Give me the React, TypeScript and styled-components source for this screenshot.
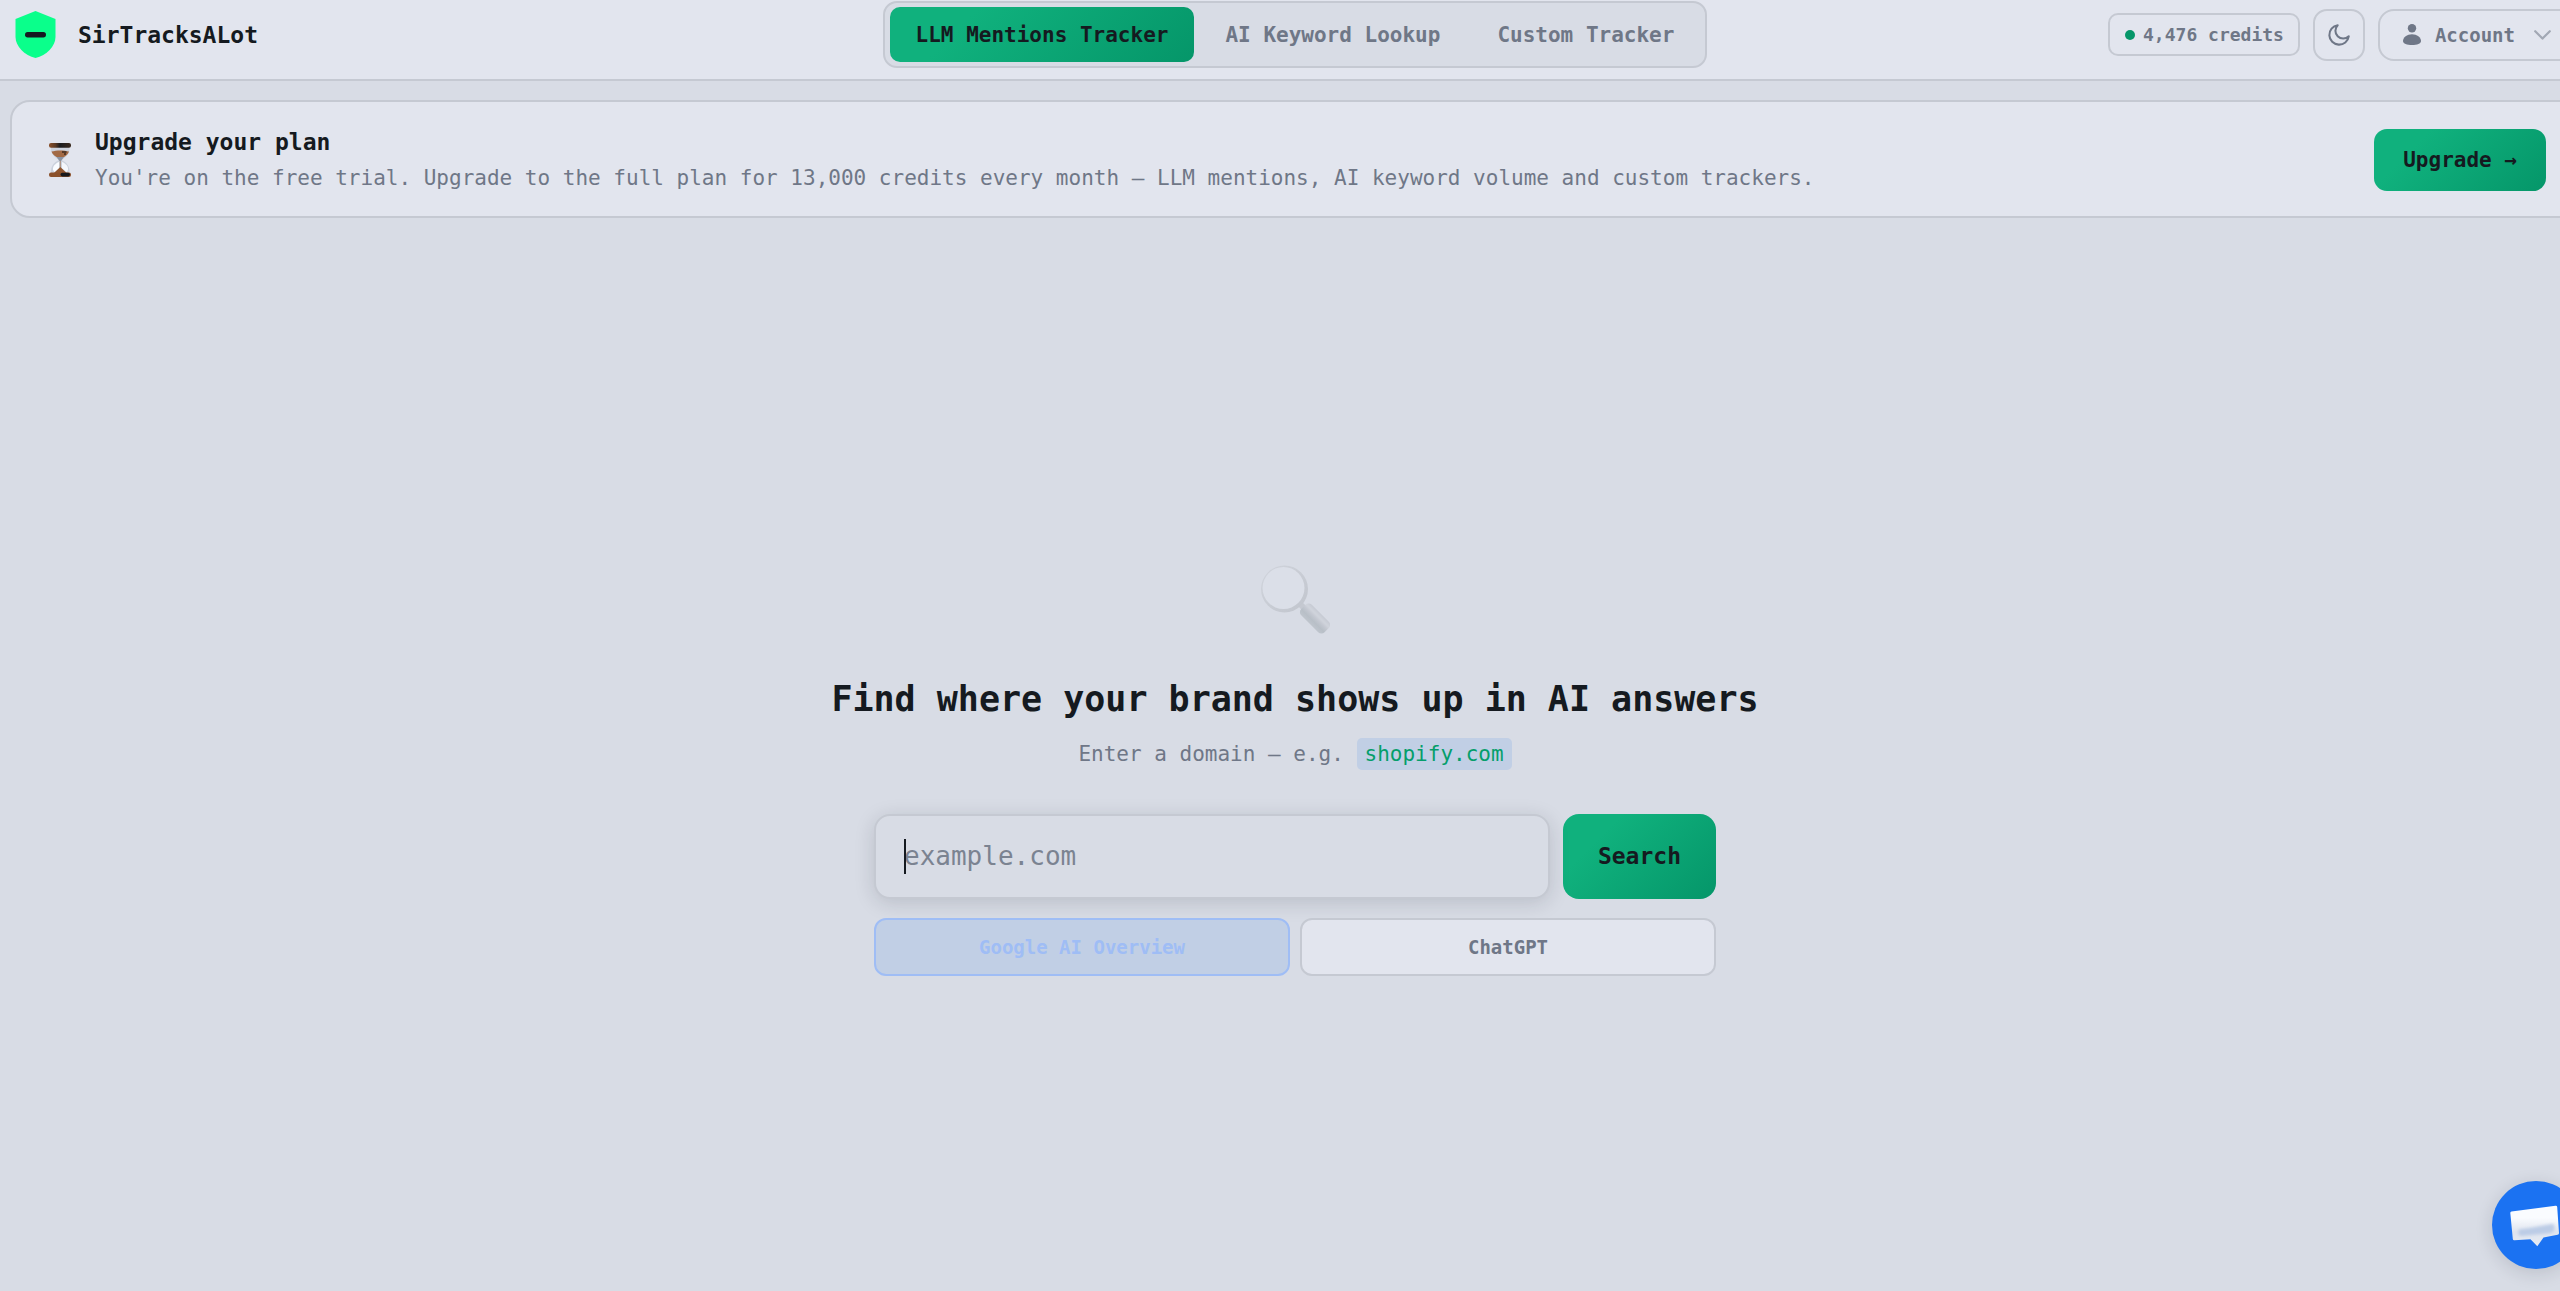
import React, { useState } from "react";
import styled, { createGlobalStyle, css } from "styled-components";

const color = {
  page: "#d8dce5",
  panel: "#e2e5ee",
  line: "#c5c9d2",
  ink: "#151a20",
  muted: "#6f7787",
  green: "#059669",
  gradient: "linear-gradient(135deg, #10b17d 25%, #059669 100%)",
  blue: "#9fbdf5",
  blueFill: "#c1cfe5",
};

const mono = `"DejaVu Sans Mono", "Liberation Mono", monospace`;

const GlobalStyle = createGlobalStyle`
  *, *::before, *::after { box-sizing: border-box; }
  body {
    margin: 0;
    background: ${color.page};
    color: ${color.ink};
    font-family: ${mono};
    overflow: hidden;
  }
  button, input { font-family: inherit; margin: 0; }
  button { cursor: pointer; }
  h1, h2, p { margin: 0; }
  svg { display: block; flex: none; }
`;

const Shell = styled.div`
  display: flex;
  flex-direction: column;
  width: calc(100% + 30px);
  min-height: 100vh;
`;

const Header = styled.header`
  display: grid;
  grid-template-columns: 1fr auto 1fr;
  align-items: center;
  padding: 1px 10px 11px;
  background: ${color.panel};
  border-bottom: 2px solid ${color.line};
`;

const Brand = styled.a`
  display: flex;
  align-items: center;
  gap: 22px;
  padding-left: 5px;
  color: ${color.ink};
  font-size: 23px;
  line-height: 32px;
  font-weight: 700;
  text-decoration: none;
`;

const Tabs = styled.nav`
  display: flex;
  gap: 5px;
  padding: 4px 5px;
  background: ${color.page};
  border: 2px solid ${color.line};
  border-radius: 14px;
`;

const Tab = styled.button<{ $active: boolean }>`
  height: 55px;
  padding: 0 26px;
  border: 0;
  border-radius: 10px;
  background: ${(p) => (p.$active ? color.gradient : "transparent")};
  color: ${(p) => (p.$active ? color.ink : color.muted)};
  font-size: 21px;
  font-weight: 700;
`;

const Tools = styled.div`
  display: flex;
  align-items: center;
  justify-content: flex-end;
  gap: 13px;
  color: ${color.muted};
`;

const Credits = styled.div`
  display: flex;
  align-items: center;
  gap: 8px;
  height: 43px;
  padding: 0 14px 0 15px;
  border: 2px solid ${color.line};
  border-radius: 10px;
  font-size: 18px;
  font-weight: 700;
`;

const Dot = styled.span`
  width: 10px;
  height: 10px;
  border-radius: 50%;
  background: ${color.green};
`;

const outlined = css`
  display: flex;
  align-items: center;
  height: 52px;
  border: 2px solid ${color.line};
  background: transparent;
  color: ${color.muted};
`;

const IconButton = styled.button`
  ${outlined}
  justify-content: center;
  width: 52px;
  padding: 0;
  border-radius: 14px;
`;

const AccountButton = styled.button`
  ${outlined}
  gap: 14px;
  padding: 0 27px 0 23px;
  border-radius: 16px;
  font-size: 19px;
  font-weight: 700;

  svg:last-child {
    margin-left: 5px;
  }
`;

const Banner = styled.section`
  display: flex;
  align-items: center;
  gap: 19px;
  margin: 19px 10px 0;
  padding: 22px 32px 20px;
  background: ${color.panel};
  border: 2px solid ${color.line};
  border-radius: 20px;
`;

const BannerText = styled.div`
  flex: 1;
  line-height: 36px;
`;

const BannerTitle = styled.h2`
  font-size: 23px;
  font-weight: 700;
`;

const BannerCopy = styled.p`
  color: ${color.muted};
  font-size: 21px;
`;

const PrimaryButton = styled.button<{ $large?: boolean }>`
  height: ${(p) => (p.$large ? 85 : 62)}px;
  padding: 0 ${(p) => (p.$large ? 35 : 29)}px;
  border: 0;
  border-radius: ${(p) => (p.$large ? 16 : 13)}px;
  background: ${color.gradient};
  color: ${color.ink};
  font-size: ${(p) => (p.$large ? 23 : 21)}px;
  font-weight: 700;
`;

const Hero = styled.main`
  flex: 1;
  display: flex;
  flex-direction: column;
  align-items: center;
  justify-content: center;
  padding-top: 30px;
`;

const HeroTitle = styled.h1`
  margin-top: 43px;
  font-size: 35px;
  line-height: 44px;
  font-weight: 700;
`;

const HeroHint = styled.p`
  margin-top: 17px;
  color: ${color.muted};
  font-size: 21px;
  line-height: 32px;
`;

const Example = styled.code`
  display: inline-block;
  padding: 0 8px;
  border-radius: 5px;
  background: ${color.blueFill};
  color: #059e6b;
  font-family: inherit;
`;

const SearchForm = styled.form`
  display: grid;
  gap: 19px;
  width: 100%;
  max-width: 842px;
  margin-top: 44px;
`;

const SearchRow = styled.div`
  display: flex;
  gap: 13px;
`;

const Field = styled.div`
  position: relative;
  flex: 1;
`;

const Caret = styled.span`
  position: absolute;
  top: 25px;
  left: 30px;
  width: 2px;
  height: 35px;
  background: ${color.ink};
`;

const DomainInput = styled.input`
  width: 100%;
  height: 85px;
  padding: 0 28px;
  border: 2px solid ${color.line};
  border-radius: 16px;
  outline: 0;
  background: ${color.page};
  box-shadow: 0 4px 20px rgba(20, 28, 40, 0.15);
  color: ${color.ink};
  font-size: 26px;

  &::placeholder {
    color: #7b8391;
    opacity: 1;
  }
`;

const Sources = styled.div`
  display: grid;
  grid-template-columns: 1fr 1fr;
  gap: 10px;
`;

const Source = styled.button<{ $active: boolean }>`
  position: relative;
  height: 58px;
  border: 2px solid ${(p) => (p.$active ? color.blue : color.line)};
  border-radius: 12px;
  background: ${(p) => (p.$active ? color.blueFill : color.panel)};
  color: ${(p) => (p.$active ? color.blue : color.muted)};
  font-size: 19px;
  font-weight: 700;
`;

const ChatButton = styled.button`
  position: fixed;
  right: -20px;
  bottom: 22px;
  width: 88px;
  height: 88px;
  padding: 0;
  border: 0;
  border-radius: 50%;
  background: #1b72f2;
  box-shadow: 0 4px 18px rgba(20, 28, 40, 0.14);
`;

const ShieldIcon = () => (
  <svg width="41" height="47" viewBox="0 0 41 47" aria-hidden="true">
    <path d="M20.500 0 40.500 8V26C40.500 35 31.500 44.500 20.500 47 9.500 44.500.5 35 .5 26V8Z" fill="#0aff8b" />
    <rect x="10" y="21" width="21" height="5.500" rx="2.700" fill="#151a20" />
  </svg>
);

const MoonIcon = () => (
  <svg width="26" height="26" viewBox="0 0 24 24" fill="none" stroke="currentColor" strokeWidth="1.900" strokeLinejoin="round" aria-hidden="true">
    <path d="M21 13.200A9 9 0 1 1 10.800 3a7.200 7.200 0 0 0 10.200 10.200Z" />
  </svg>
);

const PersonIcon = () => (
  <svg width="18" height="21" viewBox="0 0 18 21" fill="currentColor" aria-hidden="true">
    <circle cx="9" cy="4.200" r="4.200" />
    <path d="M9 10.300c5 0 9 3.200 9 6.700 0 2.700-4 4-9 4s-9-1.300-9-4c0-3.500 4-6.700 9-6.700Z" />
  </svg>
);

const ChevronIcon = () => (
  <svg width="17" height="10" viewBox="0 0 17 10" fill="none" stroke="#a2a8b4" strokeWidth="2.200" strokeLinecap="round" strokeLinejoin="round" aria-hidden="true">
    <path d="m1.200 1.200 7.300 7.400 7.300-7.400" />
  </svg>
);

const HourglassIcon = () => (
  <svg width="32" height="34" viewBox="0 0 32 34" aria-hidden="true">
    <defs>
      <linearGradient id="wood" x1="0" x2="1">
        <stop offset="0" stopColor="#8b512b" />
        <stop offset=".3" stopColor="#5a3a25" />
        <stop offset=".5" stopColor="#1b1c1e" />
        <stop offset="1" stopColor="#3a2a1f" />
      </linearGradient>
    </defs>
    <path d="M7 4h18.500c.5 6-3 10-8 13 5 2.500 8.500 6 8 13H7c-.5-7 3-10.500 8-13-5-3-8.500-7-8-13Z" fill="#ccd2dd" />
    <path d="M9 27c-.5-4 2.500-6.500 6-8v6.500L10.500 29Z" fill="#fafcff" />
    <path d="M24 27c.5-4-2.500-6.500-6-8v6.500L22.500 29Z" fill="#f4f7fc" />
    <path d="M7.500 8.500c5-1.500 12.500-1.500 17.500 0-.7 2.500-3 4.500-5 5.500h-7.500c-2-1-4.300-3-5-5.500Z" fill="#a26a45" />
    <path d="M18 9h4.500M20 11h2" stroke="#3f2d20" strokeWidth="1.400" />
    <path d="M12.500 14H20l-3 4h-1.500Z" fill="#8b92a0" />
    <path d="M16.300 18v7" stroke="#a98a76" strokeWidth="1" />
    <path d="M16.300 24c2 2 4.500 4 6.200 6H10c2-2 4.300-4 6.300-6Z" fill="#90562f" />
    <rect x="5" y="0" width="22" height="4.800" rx="2" fill="url(#wood)" />
    <rect x="5" y="29.500" width="22" height="4.500" rx="2" fill="#8b512b" />
    <rect x="16.500" y="29.800" width="9.500" height="3.600" rx="1.800" fill="#17191c" />
  </svg>
);

const MagnifierIcon = () => (
  <svg width="70" height="70" viewBox="0 0 70 70" fill="none" aria-hidden="true">
    <defs>
      <linearGradient id="rim" x1="0" y1="0" x2="1" y2="1">
        <stop offset="0" stopColor="#d0d4dc" />
        <stop offset="1" stopColor="#c1c5cd" />
      </linearGradient>
      <linearGradient id="handle" x1="0" y1="0" x2="0" y2="1">
        <stop offset="0" stopColor="#c6cad3" />
        <stop offset=".25" stopColor="#d0d4dc" />
        <stop offset=".45" stopColor="#c4c8d1" />
        <stop offset=".7" stopColor="#b8bfc7" />
        <stop offset="1" stopColor="#bfc5cd" />
      </linearGradient>
    </defs>
    <path d="m39 39 7 7" stroke="#c5c9d1" strokeWidth="6" />
    <circle cx="24.500" cy="25" r="23.500" fill="url(#rim)" />
    <circle cx="23.500" cy="24" r="21" fill="#dbdfe8" />
    <rect x="38.500" y="47" width="33" height="15" rx="4.500" fill="url(#handle)" transform="rotate(45 55 54.500)" />
  </svg>
);

const ChatIcon = () => (
  <svg width="88" height="88" viewBox="0 0 88 88" aria-hidden="true">
    <defs>
      <linearGradient id="bubble" x1="0" y1="0" x2="0" y2="1">
        <stop offset=".3" stopColor="#fafcff" />
        <stop offset=".65" stopColor="#dfe4ee" />
        <stop offset="1" stopColor="#e6ebf4" />
      </linearGradient>
      <filter id="soft">
        <feGaussianBlur stdDeviation="1.800" />
      </filter>
    </defs>
    <path d="M19.500 30.500 63.500 24.700q1.500-.2 1.700 1.300L67 52q.1 1.500-1.400 1.700L51.500 56.500 45.300 65.300 38.500 58.300 22.500 59.200q-1.500.2-1.700-1.300L18.300 32q-.1-1.300 1.200-1.500Z" fill="url(#bubble)" />
    <path d="m27 48.500 11-1.500 22-4q3 0 2.500 5-.5 3-4 4L29 55q-4-1-2-6.500Z" fill="#bccce6" filter="url(#soft)" />
  </svg>
);

const TABS = ["LLM Mentions Tracker", "AI Keyword Lookup", "Custom Tracker"];
const SOURCES = ["Google AI Overview", "ChatGPT"];

export default function App() {
  const [tab, setTab] = useState(TABS[0]);
  const [source, setSource] = useState(SOURCES[0]);
  const [domain, setDomain] = useState("");

  return (
    <>
      <GlobalStyle />
      <Shell>
        <Header>
          <Brand href="#">
            <ShieldIcon />
            SirTracksALot
          </Brand>
          <Tabs>
            {TABS.map((name) => (
              <Tab key={name} type="button" $active={name === tab} onClick={() => setTab(name)}>
                {name}
              </Tab>
            ))}
          </Tabs>
          <Tools>
            <Credits>
              <Dot />
              <span>4,476 credits</span>
            </Credits>
            <IconButton type="button" aria-label="Dark mode">
              <MoonIcon />
            </IconButton>
            <AccountButton type="button">
              <PersonIcon />
              Account
              <ChevronIcon />
            </AccountButton>
          </Tools>
        </Header>

        <Banner>
          <HourglassIcon />
          <BannerText>
            <BannerTitle>Upgrade your plan</BannerTitle>
            <BannerCopy>
              You're on the free trial. Upgrade to the full plan for 13,000 credits every month — LLM mentions, AI keyword volume and custom trackers.
            </BannerCopy>
          </BannerText>
          <PrimaryButton type="button">Upgrade →</PrimaryButton>
        </Banner>

        <Hero>
          <MagnifierIcon />
          <HeroTitle>Find where your brand shows up in AI answers</HeroTitle>
          <HeroHint>
            Enter a domain — e.g. <Example>shopify.com</Example>
          </HeroHint>
          <SearchForm onSubmit={(e) => e.preventDefault()}>
            <SearchRow>
              <Field>
                <DomainInput
                  aria-label="Domain"
                  placeholder="example.com"
                  value={domain}
                  onChange={(e) => setDomain(e.target.value)}
                />
                {domain === "" && <Caret />}
              </Field>
              <PrimaryButton type="submit" $large>
                Search
              </PrimaryButton>
            </SearchRow>
            <Sources>
              {SOURCES.map((name) => (
                <Source key={name} type="button" $active={name === source} onClick={() => setSource(name)}>
                  {name}
                </Source>
              ))}
            </Sources>
          </SearchForm>
        </Hero>
      </Shell>
      <ChatButton type="button" aria-label="Open chat">
        <ChatIcon />
      </ChatButton>
    </>
  );
}
